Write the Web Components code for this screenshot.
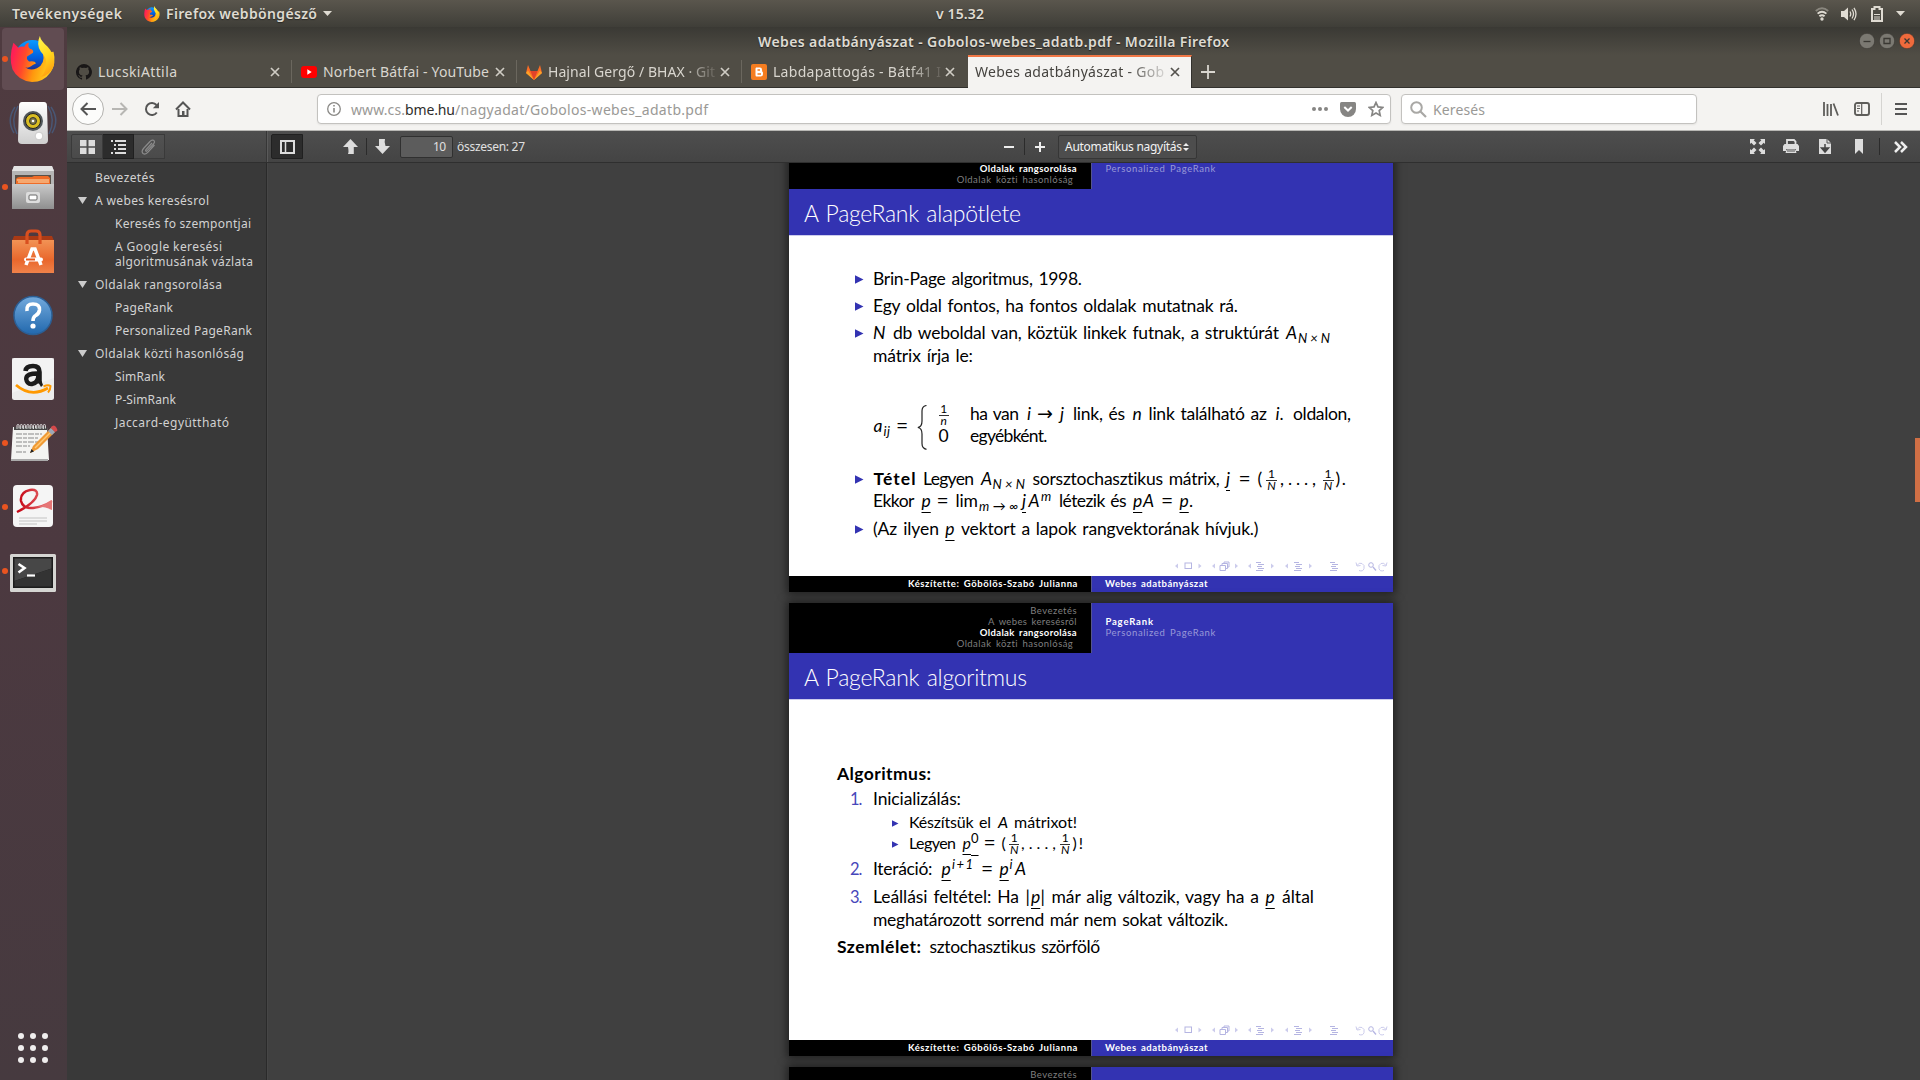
<!DOCTYPE html>
<html lang="hu">
<head>
<meta charset="utf-8">
<title>Webes adatbányászat - Gobolos-webes_adatb.pdf</title>
<style>
html,body{margin:0;height:100%;overflow:hidden;background:#404040}
body{font-family:"Noto Sans","Open Sans",sans-serif}
</style>
</head>
<body>
<desktop-shell></desktop-shell>
<script>
const mount=(el,html)=>{const r=el.attachShadow({mode:'open'});r.innerHTML=html;return r};

/* Text run whose tracking is adjusted so that it fills the width in `w`. */
class FitText extends HTMLElement{
  connectedCallback(){
    if(!this.shadowRoot)mount(this,'<style>:host{display:inline-block;white-space:pre}</style><span><slot></slot></span>');
    this.fit();window.addEventListener('load',()=>this.fit());
  }
  fit(){
    const w=+this.getAttribute('w'),s=this.shadowRoot.querySelector('span'),n=this.textContent.length;
    this.style.width=w+'px';s.style.letterSpacing='0';
    if(n>1)s.style.letterSpacing=((w-s.getBoundingClientRect().width)/(n-1)).toFixed(3)+'px';
  }
}
customElements.define('fit-text',FitText);

const firefox=s=>`<svg width="${s}" height="${s}" viewBox="0 0 46 47">
<defs><linearGradient id="fb" x1="0" y1="0" x2="0" y2="1"><stop offset="0" stop-color="#0a9bff"/><stop offset=".5" stop-color="#0060df"/><stop offset="1" stop-color="#2b1a6e"/></linearGradient>
<linearGradient id="fo" x1=".05" y1=".3" x2=".95" y2=".5"><stop offset="0" stop-color="#ff1f55"/><stop offset=".3" stop-color="#ff4a2a"/><stop offset=".6" stop-color="#ff980e"/><stop offset="1" stop-color="#ffd21e"/></linearGradient>
<linearGradient id="fy" x1=".3" y1="0" x2=".6" y2="1"><stop offset="0" stop-color="#fff14a"/><stop offset=".5" stop-color="#ffd91e"/><stop offset="1" stop-color="#ff9a10"/></linearGradient></defs>
<circle cx="22.500" cy="22" r="18" fill="url(#fb)"/>
<path fill="url(#fo)" d="M3 7L8 12Q11 10 14 11Q16 7 19 7Q17 11 20 13Q24 14 23 17L17 21Q16 24 19 26Q25 25 26 28Q23 29 21 31Q18 33 15 32Q20 36 27 33Q36 28 33 17L44 16Q47 28 41 37Q34 47 22 47Q8 46 2 34Q-2 22 3 7Z"/>
<path fill="url(#fy)" d="M30 0Q31 5 38 11Q45 18 44.500 30Q41 40 31 42Q37 36 36.500 26Q36 21 31 16Q26 9 30 0Z"/></svg>`;

class DockItem extends HTMLElement{
  connectedCallback(){
    mount(this,`<style>:host{display:flex;height:64px;width:67px;align-items:center;justify-content:center;position:relative}
    .tile{width:62px;height:62px;border-radius:4px;display:flex;align-items:center;justify-content:center;margin-right:1px}
    :host([active]) .tile{background:#614c52}
    .dot{display:none;position:absolute;left:2px;top:29px;width:6px;height:6px;border-radius:50%;background:#e95420}
    :host([running]) .dot{display:block}</style><i class="dot"></i><div class="tile"><slot></slot></div>`);
  }
}
customElements.define('dock-item',DockItem);

class AppDock extends HTMLElement{
  connectedCallback(){
    const spir=Array.from({length:9},(_,i)=>`<path d="M${6+i*3.300} 5v-3.500a1 1 0 0 1 2 0v3" fill="none" stroke="#ddd" stroke-width="1"/>`).join('');
    const lines=[10,14,18,22,28].map((y,i)=>`<path d="M5 ${y}h${[26,22,25,14,10][i]}" stroke="#888" stroke-width="1" stroke-dasharray="6 1 4 1"/>`).join('');
    mount(this,`<style>:host{display:flex;flex-direction:column;justify-content:space-between;width:67px;box-sizing:border-box;background:linear-gradient(#4f3b40,#4c3940 50%,#463a3f)}
    svg{display:block;overflow:visible}.apps{display:grid;grid-template-columns:repeat(3,6px);gap:6px;padding:0 0 17px 18px}.apps i{width:6px;height:6px;border-radius:50%;background:#f0eeee}</style>
    <nav>
    <dock-item active running>${firefox(46)}</dock-item>
    <dock-item><svg width="46" height="44" viewBox="0 0 46 44"><defs><linearGradient id="sp" x2="0" y2="1"><stop stop-color="#fff"/><stop offset="1" stop-color="#cfcfcf"/></linearGradient></defs><g fill="none" stroke="#476085" stroke-width="1.500" opacity=".75"><path d="M5 6Q-4 19 4 32M8 5Q0 19 7 33M41 6Q50 19 42 32M38 5Q46 19 39 33"/></g><path d="M12 1h22q3 0 3 4l1 34q0 4-4 4H12q-4 0-4-4L9 5q0-4 3-4z" fill="url(#sp)"/><circle cx="23" cy="20" r="10" fill="#50565a"/><circle cx="23" cy="20" r="7.500" fill="#d9bd22" stroke="#222" stroke-width="1"/><circle cx="23" cy="20" r="3.500" fill="#7c7648" stroke="#333"/><circle cx="23" cy="20" r="1.300" fill="#fff"/><circle cx="29" cy="35" r="3.800" fill="#fff" stroke="#bbb" stroke-width=".7"/></svg></dock-item>
    <dock-item running><svg width="42" height="43" viewBox="0 0 42 43"><defs><linearGradient id="fi" x2="0" y2="1"><stop stop-color="#c9c9c9"/><stop offset="1" stop-color="#8f8f8f"/></linearGradient></defs><path d="M2 0h38l2 5v38H0V5z" fill="#b5b5b5"/><path d="M2 0h38l2 5H0z" fill="#e4e4e4"/><path d="M3 9h36v9H3z" fill="#5b5148"/><path d="M4 13q1-2 4-2h12l2-1h14l2 2v6H4z" fill="#ee6c28"/><path d="M5 14h32M6 16h31" stroke="#ffe3b5"/><path d="M0 18h42v25H0z" fill="url(#fi)"/><rect x="14" y="26" width="14" height="11" rx="2" fill="#ddd"/><rect x="17" y="29" width="8" height="5" rx="1" fill="#fff" stroke="#666"/></svg></dock-item>
    <dock-item><svg width="42" height="43" viewBox="0 0 42 43"><defs><linearGradient id="so" x2="0" y2="1"><stop stop-color="#f29355"/><stop offset=".6" stop-color="#e9672c"/><stop offset="1" stop-color="#f0824a"/></linearGradient></defs><path d="M2 6h38l2 5H0z" fill="#a93a15"/><path d="M0 10h42v33H0z" fill="url(#so)"/><path d="M15 14V5q0-4 4-4h5q4 0 4 4v9" fill="none" stroke="#d94f1f" stroke-width="3.200"/><path d="M14 35L20 19h3L29 35" fill="none" stroke="#fff" stroke-width="3.500"/><rect x="12" y="27.500" width="19" height="4" rx="2" fill="#fff"/><path d="M14 29.500h9" stroke="#e65a20" stroke-width="2"/></svg></dock-item>
    <dock-item><svg width="42" height="42" viewBox="0 0 42 42"><defs><linearGradient id="he" x2="0" y2="1"><stop stop-color="#73aadd"/><stop offset="1" stop-color="#2168ad"/></linearGradient></defs><circle cx="21" cy="21.500" r="19" fill="url(#he)" stroke="#2b5f95" stroke-width="1.500"/><path d="M15 17Q14 10 21 10Q28 10 27.500 16Q27 20 23 22Q21 23.500 21 27" fill="none" stroke="#fff" stroke-width="3.600"/><circle cx="21" cy="32" r="2.600" fill="#fff"/></svg></dock-item>
    <dock-item><svg width="42" height="42" viewBox="0 0 42 42"><rect width="42" height="42" rx="2.500" fill="#ececec"/><path d="M0 0h42v20L0 35z" fill="#fafafa" opacity=".5"/><path d="M13.500 13Q14 8 21 8Q27.500 8 27.500 14V25.500" fill="none" stroke="#1c1c1c" stroke-width="4.600"/><path d="M27 15.500Q14 15 14.200 21Q15 26.500 20 26Q26 25 26.500 17" fill="none" stroke="#1c1c1c" stroke-width="4.400"/><path d="M25.500 23l3.500 6 2-2-1.500-4z" fill="#1c1c1c"/><path d="M4 27Q19 40 36 30" fill="none" stroke="#ff9900" stroke-width="2.800"/><path d="M31.500 28.500Q36 26.500 38.500 28Q38.500 32 36 34.500" fill="none" stroke="#ff9900" stroke-width="2"/></svg></dock-item>
    <dock-item running><svg width="44" height="38" viewBox="0 0 44 38"><path d="M2 3h34l2 33H0z" fill="#f4f4f2"/><path d="M0 36h37" stroke="#aaa" stroke-width="2"/><path d="M3 3h33v3H3z" fill="#444"/>${spir}${lines}<path d="M19 29L22 22L40 4L44 8L27 25Z" fill="#f09a35"/><path d="M24 24L41 7" stroke="#ffc874" stroke-width="1.500"/><path d="M19 29L20.500 25L23 27.500Z" fill="#222"/><path d="M37 7l3-3 4 4-3 3z" fill="#9ba7b8"/><path d="M40 3q3-3 5 0t1 4l-2 1-4-4z" fill="#d4494b"/></svg></dock-item>
    <dock-item running><svg style="margin-top:-2px" width="40" height="42" viewBox="0 0 40 42"><defs><linearGradient id="ev" x1="0" x2="1"><stop stop-color="#c40010"/><stop offset="1" stop-color="#ec7f7f"/></linearGradient></defs><rect width="40" height="42" rx="4" fill="#f5f5f5"/><path d="M4 27Q22 18 24 10Q25 4 17 5Q7 7 8 16Q10 24 20 23Q30 22 39 16" fill="none" stroke="url(#ev)" stroke-width="2.500"/><path d="M24 22Q33 20 39 15V25Q30 21 24 22z" fill="#e67676"/><path d="M6 33h28M6 36h28M6 39h18" stroke="#c4c4c4" stroke-width="1.200"/></svg></dock-item>
    <dock-item running><svg style="margin-top:3px" width="46" height="38" viewBox="0 0 46 38"><rect width="46" height="38" rx="1.500" fill="#d5d5d2"/><rect x="3" y="3" width="40" height="31" fill="#1c1c1c"/><path d="M4.500 4.500h37v10L4.500 27z" fill="#474747"/><path d="M4.500 27L41.500 14.500V32.500H4.500z" fill="#333"/><path d="M8.500 10l6 4-6 4.500" fill="none" stroke="#fff" stroke-width="2.600"/><path d="M17 21.500h8" stroke="#fff" stroke-width="2.200"/></svg></dock-item>
    </nav><div class="apps">${'<i></i>'.repeat(9)}</div>`);
  }
}
customElements.define('app-dock',AppDock);

class TopBar extends HTMLElement{
  connectedCallback(){
    mount(this,`<style>:host{display:grid;grid-template-columns:1fr 48px 1fr;align-items:center;height:27px;background:linear-gradient(#5a564d,#3f3e38);color:#dfdbd2;font-weight:600;font-size:14px;line-height:27px;text-shadow:0 1px 1px #2a2925}
    .l,.r{display:flex;align-items:center}.l{padding-left:12px}.r{justify-content:flex-end;padding-right:15px}
    svg{display:block}</style>
    <div class="l"><fit-text w="110">Tevékenységek</fit-text><span style="margin:0 6px 0 22px">${firefox(16)}</span><fit-text w="151">Firefox webböngésző</fit-text>
    <svg style="margin-left:6px" width="9" height="5"><path d="M0 0h9l-4.500 5z" fill="#dfdbd2"/></svg></div>
    <fit-text w="48">v 15.32</fit-text>
    <div class="r"><svg width="14" height="14" viewBox="0 0 14 14" fill="none" stroke="#dfdbd2" stroke-width="1.900"><path d="M.8 4Q7-1.500 13.200 4" opacity=".4"/><path d="M2.600 6.600Q7 2.800 11.400 6.600"/><path d="M4.400 9.300Q7 7 9.600 9.300"/><circle cx="7" cy="12" r="1" fill="#dfdbd2" stroke-width="1.400"/></svg>
    <svg style="margin-left:12px" width="16" height="14" viewBox="0 0 16 14"><path d="M0 4h3l4-3.500v13L3 10H0z" fill="#dfdbd2"/><path d="M9 4.500q1.500 2.500 0 5M11 2.500q3 4.500 0 9M13 .8q4 6.200 0 12.400" fill="none" stroke="#dfdbd2" stroke-width="1.300"/></svg>
    <svg style="margin:0 13px 0 14px" width="12" height="16" viewBox="0 0 12 16"><path d="M1 3h2.500V1h5v2H11v12H1z" fill="none" stroke="#dfdbd2" stroke-width="2"/><path d="M3 8.500h6M3 11h6M3 13h6" stroke="#dfdbd2" stroke-width="1"/></svg>
    <svg width="9" height="5"><path d="M0 0h9l-4.500 5z" fill="#dfdbd2"/></svg></div>`);
  }
}
customElements.define('top-bar',TopBar);

class TitleBar extends HTMLElement{
  connectedCallback(){
    mount(this,`<style>:host{display:grid;grid-template-columns:1fr 471px 1fr;height:28px;align-items:center;background:linear-gradient(#3a3934,#504d45);color:#dfdbd2;font-weight:600;font-size:14px;line-height:27px;text-shadow:0 1px 1px #222}
    .b{grid-column:3;display:flex;justify-content:flex-end;gap:4px;padding-right:5px}svg{display:block}fit-text{grid-column:2}</style>
    <fit-text w="471">Webes adatbányászat - Gobolos-webes_adatb.pdf - Mozilla Firefox</fit-text>
    <div class="b">${['#7b7972|M4.500 8.500h7','#7b7972|M5 5.500h6v5h-6z','#ef6a3c|M5.500 5.500l5 5M10.500 5.500l-5 5'].map(s=>{const[c,d]=s.split('|');return`<svg width="16" height="16"><circle cx="8" cy="8" r="7.700" fill="${c}" stroke="#35342f" stroke-width=".6"/><path d="${d}" fill="none" stroke="#3a3833" stroke-width="1.300"/></svg>`}).join('')}</div>`);
  }
}
customElements.define('title-bar',TitleBar);

class BrowserTab extends HTMLElement{
  connectedCallback(){
    const a=this.hasAttribute('active');
    mount(this,`<style>:host{display:flex;box-sizing:border-box;width:225px;height:33px;align-items:center;padding:1px 12px 0 9px;color:#d9d6cf;font-size:14px;line-height:32px;position:relative}
    :host(:not([active]))::after{content:"";position:absolute;right:0;top:5px;width:1px;height:23px;background:#6b675e}
    :host([last])::after{display:none}
    :host([active]){background:#f4f3f1;border-top:2px solid #f07746;color:#45433f;width:224px;border-right:1px solid #32312d;margin-left:1px;line-height:28px;padding:0 11px 1px 7px}
    ::slotted(svg){flex:none;margin-right:6px}
    .t{flex:1;min-width:0;overflow:hidden;white-space:nowrap}
    :host([fade]) .t{-webkit-mask:linear-gradient(90deg,#000 80%,transparent 103%)}
    .x{flex:none;margin-left:4px}</style>
    <slot name="icon"></slot><div class="t"><slot></slot></div><svg class="x" width="10" height="10"><path d="M1 1l8 8M9 1l-8 8" stroke="${a?'#55534e':'#cfccc4'}" stroke-width="1.700"/></svg>`);
  }
}
customElements.define('browser-tab',BrowserTab);

class TabStrip extends HTMLElement{
  connectedCallback(){
    mount(this,`<style>:host{display:flex;height:33px;box-sizing:border-box;background:#504d45;box-shadow:inset 0 -1px #32312d}.plus{align-self:center;margin-left:9px}</style>
    <browser-tab><svg slot="icon" width="16" height="16" viewBox="0 0 16 16"><path fill="#191717" fill-rule="evenodd" d="M8 0a8 8 0 0 0-2.530 15.590c.4.070.55-.17.550-.380V13.700c-2.230.480-2.700-.950-2.700-.950-.360-.920-.890-1.170-.890-1.170-.730-.500.050-.490.050-.490.800.060 1.230.830 1.230.830.710 1.220 1.870.870 2.330.660.070-.520.280-.870.510-1.070-1.780-.200-3.640-.890-3.640-3.950 0-.870.310-1.590.820-2.150-.080-.200-.360-1.020.080-2.120 0 0 .670-.210 2.200.820a7.600 7.600 0 0 1 4 0c1.530-1.040 2.200-.820 2.200-.820.440 1.100.160 1.920.080 2.120.510.560.820 1.270.820 2.150 0 3.070-1.870 3.750-3.650 3.950.290.250.540.730.540 1.480v2.200c0 .210.150.460.550.380A8 8 0 0 0 8 0z"/></svg><fit-text w="79">LucskiAttila</fit-text></browser-tab>
    <browser-tab><svg slot="icon" width="16" height="12" viewBox="0 0 16 12"><rect width="16" height="12" rx="3" fill="#f00"/><path d="M6.300 3.300l4.400 2.700-4.400 2.700z" fill="#fff"/></svg><fit-text w="166">Norbert Bátfai - YouTube</fit-text></browser-tab>
    <browser-tab fade><svg slot="icon" width="16" height="16" viewBox="0 0 16 16"><path d="M0 9l2-8 2.500 6h7L14 1l2 8-8 7z" fill="#fc6d26"/><path d="M4.500 7h7L8 16z" fill="#e24329"/><path d="M0 9l2-2.500L8 16zM16 9l-2-2.500L8 16z" fill="#fca326"/></svg><fit-text w="167">Hajnal Gergő / BHAX · Git</fit-text></browser-tab>
    <browser-tab fade last><svg slot="icon" width="16" height="16" viewBox="0 0 16 16"><rect width="16" height="16" rx="2" fill="#f57d20"/><path d="M5 3.500h4q2 0 2 2.200T12 8.500v1.700q0 2.300-2.500 2.300H5.500Q4.500 12.500 4.500 11V4.500z" fill="#fff"/><path d="M6.500 6h2.500M6.500 10h3.500" stroke="#f57d20" stroke-width="1.300"/></svg><fit-text w="168">Labdapattogás - Bátf41 I</fit-text></browser-tab>
    <browser-tab active fade><fit-text w="189">Webes adatbányászat - Gob</fit-text></browser-tab>
    <svg class="plus" width="14" height="14"><path d="M7 0v14M0 7h14" stroke="#d9d6cf" stroke-width="1.800"/></svg>`);
  }
}
customElements.define('tab-strip',TabStrip);

class NavBar extends HTMLElement{
  connectedCallback(){
    mount(this,`<style>:host{display:flex;align-items:center;height:43px;box-sizing:border-box;background:#f4f3f1;border-bottom:1px solid #b8b7b4;padding:0 13px 0 5px;font-size:14px;color:#9a9996;line-height:28px}
    svg{display:block;flex:none}fit-text{padding-top:1px}.box{display:flex;align-items:center;box-sizing:border-box;height:30px;background:#fff;border:1px solid #c3c2bf;border-radius:4px;box-shadow:0 1px 2px #0001}
    .url{width:1074px;margin-left:126px;padding:0 6px 0 9px}.search{width:296px;margin-left:10px;padding-left:8px}
    .bk{width:30px;height:30px;border:1px solid #b3b2af;border-radius:50%;background:#fcfcfb;display:flex;align-items:center;justify-content:center}</style>
    <div class="bk"><svg width="16" height="14"><path d="M16 7H2M7.500 1L1.500 7l6 6" fill="none" stroke="#555" stroke-width="2"/></svg></div>
    <svg style="margin-left:8px" width="16" height="14"><path d="M0 7h14M8.500 1l6 6-6 6" fill="none" stroke="#b7b6b3" stroke-width="2"/></svg>
    <svg style="margin-left:16px" width="16" height="16"><path d="M12.800 11.500A6 6 0 1 1 12.500 4" fill="none" stroke="#555" stroke-width="2"/><path d="M15 1v6.200H8.800z" fill="#555"/></svg>
    <svg style="margin-left:15px" width="16" height="16"><path d="M1 8.500L8 1.500l7 7" fill="none" stroke="#555" stroke-width="2"/><path d="M3.500 8v7h9V8" fill="none" stroke="#555" stroke-width="2"/><path d="M7 10h2.500v5H7z" fill="#555"/></svg>
    <div class="box url"><svg width="14" height="14"><circle cx="7" cy="7" r="6.300" fill="none" stroke="#8a8986" stroke-width="1.300"/><path d="M7 6v4.500M7 3v1.600" stroke="#8a8986" stroke-width="1.600"/></svg>
    <fit-text style="margin-left:10px" w="54">www.cs.</fit-text><fit-text style="color:#2e2d2b" w="50">bme.hu</fit-text><fit-text w="253">/nagyadat/Gobolos-webes_adatb.pdf</fit-text>
    <svg style="margin-left:auto" width="16" height="4"><g fill="#868583"><circle cx="2" cy="2" r="2"/><circle cx="8" cy="2" r="2"/><circle cx="14" cy="2" r="2"/></g></svg>
    <svg style="margin-left:12px" width="16" height="15"><path d="M1.500 0h13Q16 0 16 1.500V7A8 8 0 0 1 0 7V1.500Q0 0 1.500 0z" fill="#868583"/><path d="M4.300 5L8 8.500 11.700 5" fill="none" stroke="#fff" stroke-width="2"/></svg>
    <svg style="margin-left:12px" width="16" height="16"><path d="M8 1.500l2 4.400 4.800.500-3.600 3.200 1 4.800L8 12l-4.200 2.400 1-4.800L1.200 6.400 6 5.900z" fill="none" stroke="#868583" stroke-width="1.700"/></svg></div>
    <div class="box search"><svg width="17" height="17"><circle cx="6.500" cy="6.500" r="5.300" fill="none" stroke="#a9a8a5" stroke-width="2"/><path d="M10.500 10.500l5.500 5.500" stroke="#a9a8a5" stroke-width="2.200"/></svg><fit-text style="margin-left:6px" w="52">Keresés</fit-text></div>
    <svg style="margin-left:auto" width="16" height="14" fill="none" stroke="#5e5d5a" stroke-width="1.800"><path d="M1 0v14M4.500 2v12M8 2v12M10.500 1.500L15 13.500"/></svg>
    <svg style="margin-left:15px" width="16" height="14"><rect x="1" y="1" width="14" height="12" rx="2" fill="none" stroke="#5e5d5a" stroke-width="1.900"/><path d="M7.700 1v12M3 4h3M3 6.500h3M3 9h2" stroke="#5e5d5a" stroke-width="1.200"/></svg>
    <svg style="margin-left:11px" width="1" height="32"><path d="M.5 0v32" stroke="#d5d4d1"/></svg>
    <svg style="margin-left:13px" width="12" height="12"><path d="M0 1h12M0 6h12M0 11h12" stroke="#555" stroke-width="2"/></svg>`);
  }
}
customElements.define('nav-bar',NavBar);

class PdfToolbar extends HTMLElement{
  connectedCallback(){
    mount(this,`<style>:host{display:flex;height:32px;color:#e0e0e0;font-size:12px;line-height:22px;background:linear-gradient(#4e4e4e,#444);box-sizing:border-box;border-bottom:1px solid #2f2f2f}
    .s,.m{display:flex;align-items:center;box-sizing:border-box}.s{width:200px;padding-left:4px;border-right:1px solid #363636}.m{flex:1;padding:0 12px 0 3px;border-left:1px solid #5a5a5a}
    svg{display:block;flex:none}.b{box-sizing:border-box;width:31px;height:25px;display:flex;align-items:center;justify-content:center;border:1px solid #3a3a3a;border-left-width:0;background:#ffffff08}
    .b.on{background:#2c2c2c;border-color:#202020}.first{border-left-width:1px;width:32px;border-radius:2px 0 0 2px}.v{width:1px;height:17px;background:#2b2b2b;flex:none}
    .pg{box-sizing:border-box;width:53px;height:22px;border:1px solid #303030;background:#5c5c5c;border-radius:2px;padding-left:32px;line-height:20px;margin:0 4px 0 10px}
    .sel{box-sizing:border-box;width:139px;height:24px;border:1px solid #363636;border-radius:2px;background:#4d4d4d;padding-left:6px;display:flex;align-items:center;margin-left:13px;color:#f2f2f2}</style>
    <div class="s"><div class="b first"><svg width="15" height="14" fill="#ddd"><path d="M0 0h6.500v6.300H0zM8.500 0H15v6.300H8.500zM0 7.800h6.500V14H0zM8.500 7.800H15V14H8.500z"/></svg></div>
    <div class="b on"><svg width="15" height="14" stroke="#ddd" stroke-width="2"><path d="M0 1h2M4 1h11M3 5h2M7 5h8M3 9h2M7 9h8M0 13h2M4 13h11"/></svg></div>
    <div class="b"><svg width="16" height="16" fill="none" stroke="#8b8b8b" stroke-width="1.200"><path d="M11 4L5 10.500q-1 2 .5 1.800L12.500 5q2-2.500 0-3.700Q10.500.5 9 2.500L2.500 9.500Q0 12.500 2 14.500 4.500 16 7 13.200L13.500 6"/></svg></div></div>
    <div class="m"><div class="b on first"><svg width="15" height="14"><path d="M1 1h13v12H1z" fill="none" stroke="#ddd" stroke-width="2"/><path d="M5.500 1v12" stroke="#ddd" stroke-width="1.500"/></svg></div>
    <svg style="margin-left:40px" width="15" height="15"><path d="M7.500 0L15 8h-4.200v7H5Q6 13 5 8H0z" fill="#ddd"/></svg><i class="v" style="margin:0 8px"></i>
    <svg width="15" height="15"><path d="M7.500 15L0 7h4V0h6Q9 3 10.500 7H15z" fill="#ddd"/></svg>
    <div class="pg"><fit-text w="13">10</fit-text></div><fit-text w="68">összesen: 27</fit-text>
    <svg style="margin-left:479px" width="10" height="2"><path d="M0 1h10" stroke="#eee" stroke-width="2"/></svg><i class="v" style="margin:0 10px"></i><svg width="10" height="10"><path d="M0 5h10M5 0v10" stroke="#eee" stroke-width="2"/></svg>
    <div class="sel"><fit-text w="117">Automatikus nagyítás</fit-text><svg style="margin-left:1px" width="6" height="8" fill="#eee"><path d="M0 3h6L3 0zM0 5h6L3 8z"/></svg></div>
    <svg style="margin-left:auto" width="15" height="15" fill="#ddd"><path d="M0 0h5L3.700 1.300 6.500 4 4 6.500 1.300 3.700 0 5zM15 0h-5l1.300 1.300L8.500 4 11 6.500l2.700-2.800L15 5zM0 15h5l-1.300-1.300L6.500 11 4 8.500l-2.700 2.800L0 10zM15 15h-5l1.300-1.300L8.500 11 11 8.500l2.700 2.800L15 10z"/></svg>
    <svg style="margin-left:18px" width="16" height="15"><path d="M4 6V1h7l1.500 1.500V6" fill="none" stroke="#ddd" stroke-width="1.800"/><path d="M1.500 5h13L16 7v5h-3v-2H3v2H0V7z" fill="#ddd"/><path d="M3.500 10.500h9l1 3.500h-11z" fill="#ddd"/><path d="M4 12h8" stroke="#555"/></svg>
    <svg style="margin-left:20px" width="12" height="15"><path d="M0 0h8l4 4v11H0z" fill="#ddd"/><path d="M8 0v4h4" fill="none" stroke="#555"/><path d="M6 5v5M6 13L2.500 9h7z" fill="#444" stroke="#444" stroke-width="1.500"/></svg>
    <svg style="margin-left:24px" width="8" height="15"><path d="M0 0h8v15L4 11 0 15z" fill="#ddd"/></svg><i class="v" style="margin:0 14px 0 16px"></i>
    <svg width="14" height="12"><path d="M1 1l5 5-5 5M7 1l5 5-5 5" fill="none" stroke="#eee" stroke-width="2.500"/></svg></div>`);
  }
}
customElements.define('pdf-toolbar',PdfToolbar);

class OutlineTree extends HTMLElement{
  connectedCallback(){
    const d=[[0,'Bevezetés',59.5],[1,'A webes keresésrol',114],[2,'Keresés fo szempontjai',136],[2,'A Google keresési',107,'algoritmusának vázlata',138],[1,'Oldalak rangsorolása',127],[2,'PageRank',58],[2,'Personalized PageRank',137],[1,'Oldalak közti hasonlóság',149],[2,'SimRank',50],[2,'P-SimRank',61],[2,'Jaccard-együttható',114]];
    mount(this,`<style>:host{display:block;width:200px;box-sizing:border-box;background:#393939;border-right:1px solid #2a2a2a;color:#d2d2d2;font-size:12px;line-height:15px;padding-top:3px}
    div{padding:4px 0 4px 28px}.c{padding-left:48px}.p{padding-left:11px;display:flex;align-items:center}.p svg{margin-right:8px}fit-text{vertical-align:top}</style>`+
    d.map(([k,t,w,t2,w2])=>`<div class="${['','p','c'][k]}">${k==1?'<svg width="9" height="7"><path d="M0 0h9L4.500 7z" fill="#ccc"/></svg>':''}<fit-text w="${w}">${t}</fit-text>${t2?`<br><fit-text w="${w2}">${t2}</fit-text>`:''}</div>`).join(''));
  }
}
customElements.define('outline-tree',OutlineTree);

/* Typesetting helpers: a line is a baseline plus runs given by their start and end. */
const line=(b,fs,x0,segs,h=20)=>{
  let c=x0;
  const html=segs.map(([a,e,t,k=''])=>{
    const m=(a-c).toFixed(1);c=e;const w=(e-a).toFixed(1);
    if(k=='tri')return`<i class="tri" style="margin-left:${m}px;width:${w}px;height:${w}px"></i>`;
    if(k=='frac')return`<span class="frac" style="margin-left:${m}px;width:${w}px"><b>1</b><s></s><b class="i">${t}</b></span>`;
    if(t=='=')k+=' rel';
    return`<fit-text class="${k}" w="${w}" style="margin-left:${m}px">${t}</fit-text>`}).join('');
  return{top:b+.7-h/2-.388*fs,h,html:`<div class="ln" style="font-size:${fs}px;height:${h}px;line-height:${h}px;`,body:html};
};
const stack=(y0,items)=>{let c=y0;return items.map(o=>{const m=Math.round(o.top-c);c+=m+o.h;return o.html+`margin-top:${m}px">`+o.body+'</div>'}).join('')};
const F=17.5,NXN='N×N';
const eq={top:403,h:48,html:'<div class="eq" style="height:48px;',body:
  `<div class="c" style="width:44px">${stack(403,[line(432,F,873,[[873.5,883.5,'a','i'],[883.5,890,'ij','i sub'],[896,909,'=','']])])}</div>
  <svg width="10" height="45" style="margin-top:2px"><path d="M9.500 .5Q5 1 5 6V16Q5 22 .8 22.500Q5 23 5 29V38.500Q5 43.500 9.500 44.300" fill="none" stroke="#222" stroke-width="1.200"/></svg>
  <div class="c" style="width:43px">${stack(403,[line(420,F,927,[[939,948.5,'n','frac']]),line(442.5,F,927,[[938.5,947,'0']])])}</div>
  <div class="c">${stack(403,[line(420,F,970,[[970,1019,'ha van'],[1027,1031,'i','i'],[1037,1054,'→','ar'],[1060,1066,'j','i'],[1073,1125,'link, és'],[1132.5,1141,'n','i'],[1148.5,1267,'link található az'],[1275.5,1284,'i.','i'],[1293,1351,'oldalon,']]),line(442,F,970,[[970,1047.5,'egyébként.']])])}</div>`};
const slideA=()=>stack(236,[
  line(284.7,F,789,[[854.5,863.5,'','tri'],[873,1082,'Brin-Page algoritmus, 1998.']]),
  line(311.7,F,789,[[854.5,863.5,'','tri'],[873,1238,'Egy oldal fontos, ha fontos oldalak mutatnak rá.']]),
  line(339,F,789,[[854.5,863.5,'','tri'],[873,886,'N','i'],[893,1279,'db weboldal van, köztük linkek futnak, a struktúrát'],[1286,1297.5,'A','i'],[1298,1330,NXN,'i sub']]),
  line(361.7,F,789,[[873,973,'mátrix írja le:']]),
  eq,
  line(485.3,F,789,[[854.5,863.5,'','tri'],[873.5,915.5,'Tétel','bd'],[923,974,'Legyen'],[981,992,'A','i'],[992.5,1025,NXN,'i sub'],[1032.5,1220,'sorsztochasztikus mátrix,'],[1226,1232,'j','i u'],[1238.5,1251,'='],[1257.5,1263,'('],[1266,1277,'N','frac'],[1280,1316,',...,'],[1322.5,1333.5,'N','frac'],[1335.5,1346,').']]),
  line(507.3,F,789,[[873,914.5,'Ekkor'],[921.5,931,'p','i u'],[936.5,949,'='],[955.5,978,'lim'],[979,1018,'m→∞','i sub'],[1022,1027,'j','i u'],[1028.5,1040,'A','i'],[1041,1052,'m','i sup'],[1059,1126.5,'létezik és'],[1133,1143,'p','i u'],[1143,1155,'A','i'],[1161,1173.5,'='],[1179.5,1189,'p','i u'],[1189,1192,'.']]),
  line(535,F,789,[[854.5,863.5,'','tri'],[873,939,'(Az ilyen'],[945.3,955,'p','i u'],[961,1258.5,'vektort a lapok rangvektorának hívjuk.)']])
]);
const G=16;
const slideB=()=>stack(700,[
  line(780.3,F,789,[[837,931,'Algoritmus:','bd']]),
  line(804.7,F,789,[[850,862.5,'1.','n'],[873,961,'Inicializálás:']]),
  line(827.7,G,789,[[891.5,898.5,'','tri'],[909,991,'Készítsük el'],[998,1008.5,'A','i'],[1014,1077,'mátrixot!']],18),
  line(848.7,G,789,[[891.5,898.5,'','tri'],[909,956,'Legyen'],[962.5,971,'p','i u'],[971,978.5,'0','sup u1'],[983.5,996,'='],[1001.5,1007,'('],[1009.3,1019.3,'N','frac'],[1021,1056,',...,'],[1060,1070.5,'N','frac'],[1072.5,1083,')!']],18),
  line(875.3,F,789,[[850,862.5,'2.','n'],[873,932.5,'Iteráció:'],[941.5,951,'p','i u'],[952,973,'i+1','i sup'],[981,993.5,'='],[999.5,1009,'p','i u'],[1009.5,1014,'i','i sup'],[1015,1027,'A','i']]),
  line(903,F,789,[[850,862.5,'3.','n'],[873,1019,'Leállási feltétel: Ha'],[1025.5,1030,'|'],[1031,1040.5,'p','i u'],[1040.5,1045,'|'],[1051.5,1259,'már alig változik, vagy ha a'],[1265.5,1275.5,'p','i u'],[1282,1314,'által']]),
  line(925.7,F,789,[[873,1227.5,'meghatározott sorrend már nem sokat változik.']]),
  line(953,F,789,[[837,921,'Szemlélet:','bd'],[929.5,1100.5,'sztochasztikus szörfölő']])
]);

class PdfSlide extends HTMLElement{
  connectedCallback(){
    const t=this.getAttribute('heading'),w=this.getAttribute('hw'),k=this.getAttribute('kind');
    const doc=x=>`<path d="M${x} 1.500h5M${x+2} 3.500h6M${x+1} 5.500h5M${x+2} 7.500h6M${x} 9.500h7" stroke="#b5b5e2" stroke-width="1.200"/>`;
    const L=x=>`<path d="M${x+3} 2.500v5L${x} 5z" fill="#ccccec"/>`,R=x=>`<path d="M${x} 2.500v5l3-2.500z" fill="#ccccec"/>`;
    /* Slide A is scrolled so that its first two header lines lie above the view; C shows only its first. */
    const left=[line(10.5,9.5,0,[[241.3,287.6,'Bevezetés']],10),line(21.7,9.5,0,[[199,287.6,'A webes keresésről']],10),line(32.700,9.5,0,[[190.700,287.6,'Oldalak rangsorolása','hi']],10),line(44,9.5,0,[[167.700,284,'Oldalak közti hasonlóság']],10)];
    const right=[line(21.700,9.5,303,[[316.4,364,'PageRank','hi']],10),line(32.700,9.5,303,[[316.4,426.300,'Personalized PageRank','lo']],10)];
    const cut={A:[left.slice(2),right.slice(1)],B:[left,right],C:[left.slice(0,1),[]]}[k];
    mount(this,`<style>:host{display:flex;flex-direction:column;width:604px;height:453px;background:#fff;flex:none;font-family:Lato,"Liberation Sans",sans-serif;color:#000;box-shadow:0 0 9px 2px rgba(0,0,0,.55);word-spacing:.1em}
    header{display:flex;height:50px;background:#3333b2;font-size:9.500px;color:#7f7f7f;flex:none}
    .l{box-sizing:border-box;width:303px;background:#000;border-right:1px solid #55558c}header>div{display:flow-root}
    h1{margin:0;height:47px;box-sizing:border-box;padding-left:15px;background:#3333b2;border-bottom:1px solid #ccccec;color:#fff;font-size:23px;font-weight:300;line-height:46px;padding-top:1px;flex:none}
    main{flex:1;min-height:0;display:flow-root}
    footer{display:flex;height:16px;background:#3333b2;color:#fff;font-size:9.500px;font-weight:700;line-height:16px;flex:none}
    footer .l{display:flex;justify-content:flex-end;padding-right:14px}footer>fit-text{margin-left:13px}
    .ln{white-space:nowrap}.ln fit-text{line-height:0}.i{font-style:italic}.bd{font-weight:700}.hi{color:#fff;font-weight:700}.lo{color:#9999d8}.n{color:#4747ba;font-size:16.500px}
    .rel{font-size:21px;vertical-align:-1px}
    .sub{font-size:13px;vertical-align:-3.500px}.sup{font-size:13px;vertical-align:6.500px}.ar{font-family:"DejaVu Sans";font-size:19px}
    .u{text-decoration:underline;text-decoration-thickness:1px;text-underline-offset:5px;text-decoration-skip-ink:none}.u1{text-decoration:underline;text-decoration-thickness:1px;text-underline-offset:11.500px}
    .tri{display:inline-block;background:#3333b2;clip-path:polygon(0 0,100% 50%,0 100%);vertical-align:1px}
    .frac{display:inline-block;height:23px;vertical-align:-5px;margin-bottom:-6px;margin-top:-8px;font-size:12px;text-align:center;line-height:11px}
    .frac b{display:block;font-weight:400;height:11px}.frac s{display:block;height:1px;background:#333;margin-top:1px}.frac b.i{margin-top:-1px}
    .eq{display:flex;align-items:flex-start;padding-left:84px}.eq svg{flex:none}.c{flex:none;display:flow-root}
    .nav{display:block;margin-left:386px;flex:none;margin-bottom:4px}</style>
    <header><div class="l">${stack(0,cut[0])}</div><div>${stack(0,cut[1])}</div></header>
    <h1>${t?`<fit-text w="${w}">${t}</fit-text>`:''}</h1><main>${k=='A'?slideA():k=='B'?slideB():''}</main>
    ${k=='C'?'':`<svg class="nav" width="214" height="11" fill="none">${L(0)}<rect x="10" y="2" width="6.500" height="5.500" stroke="#b5b5e2"/>${R(23.5)}${L(37)}<path d="M45 4.500h5.500v5H45zM47 4.500v-2h5.500v5h-2M49 2.500V1h5v5h-1.500" stroke="#b5b5e2"/>${R(60)}${L(73)}${doc(81)}${R(96)}${L(110)}${doc(119)}${R(134)}${doc(155)}<path d="M182 4.500q2-3.500 5-2t2 5-5 2M181 1.500l1 3.500 3.500-.5M211 4.500q-2-3.500-5-2t-2 5 5 2M212 1.500l-1 3.500-3.500-.5" stroke="#ccccec"/><circle cx="196" cy="4" r="2.300" stroke="#b5b5e2"/><path d="M198 6l3 3.500" stroke="#b5b5e2" stroke-width="1.300"/></svg>
    <footer><div class="l"><fit-text w="169">Készítette: Göbölös-Szabó Julianna</fit-text></div><fit-text w="102.500">Webes adatbányászat</fit-text></footer>`}`);
  }
}
customElements.define('pdf-slide',PdfSlide);

class PdfViewer extends HTMLElement{
  connectedCallback(){
    mount(this,`<style>:host{display:flex;flex-direction:column;overflow:hidden;background:#404040}
    .row{display:flex;flex:1;min-height:0}.view{flex:1;overflow:hidden;position:relative;border-left:1px solid #464646;box-sizing:border-box}
    .pages{display:flex;flex-direction:column;gap:11px;padding-left:521px;margin-top:-24px}
    .thumb{position:absolute;right:0;top:275px;width:5px;height:64px;background:#d06f45}</style>
    <pdf-toolbar></pdf-toolbar><div class="row"><outline-tree></outline-tree><div class="view"><div class="pages">
    <pdf-slide kind="A" heading="A PageRank alapötlete" hw="217"></pdf-slide>
    <pdf-slide kind="B" heading="A PageRank algoritmus" hw="223"></pdf-slide>
    <pdf-slide kind="C"></pdf-slide></div><i class="thumb"></i></div></div>`);
  }
}
customElements.define('pdf-viewer',PdfViewer);

class DesktopShell extends HTMLElement{
  connectedCallback(){
    mount(this,`<style>:host{display:flex;flex-direction:column;width:1920px;height:1080px;overflow:hidden}
    .d{display:flex;flex:1;min-height:0}.w{flex:1;display:flex;flex-direction:column;min-width:0}pdf-viewer{flex:1;min-height:0}</style>
    <top-bar></top-bar><div class="d"><app-dock></app-dock><div class="w"><title-bar></title-bar><tab-strip></tab-strip><nav-bar></nav-bar><pdf-viewer></pdf-viewer></div></div>`);
  }
}
customElements.define('desktop-shell',DesktopShell);
</script>
</body>
</html>
